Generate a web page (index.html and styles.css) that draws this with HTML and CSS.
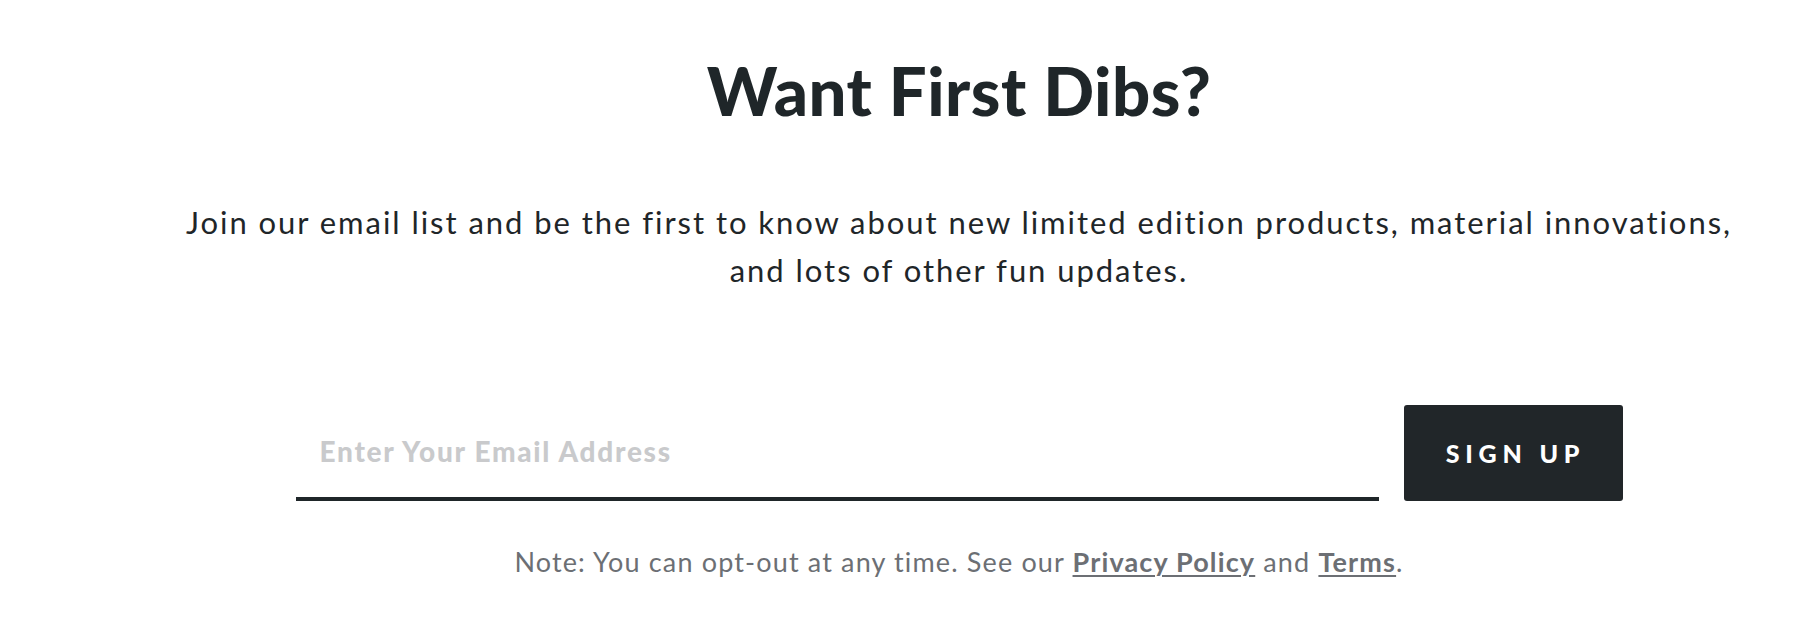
FILE: index.html
```html
<!DOCTYPE html>
<html lang="en">
<head>
<meta charset="utf-8">
<title>Want First Dibs?</title>
<link rel="stylesheet" href="styles.css">
</head>
<body>
<section class="signup">
  <h2 class="title">Want First Dibs?</h2>
  <p class="lead">Join our email list and be the first to know about new limited edition products, material innovations,<br>and lots of other fun updates.</p>
  <form class="form" onsubmit="return false;">
    <input class="email" type="email" placeholder="Enter Your Email Address">
    <button class="btn" type="submit">SIGN UP</button>
  </form>
  <p class="note">Note: You can opt-out at any time. See our <a href="#" class="link">Privacy Policy</a> and <a href="#" class="link">Terms</a>.</p>
</section>
</body>
</html>
```

FILE: styles.css
```css
* { box-sizing: border-box; }
html, body { margin: 0; padding: 0; background: #ffffff; }
body { font-family: "Lato", "Noto Sans", sans-serif; color: #1f2629; }

.signup {
  padding: 52px 0 40px 100px;
  display: flex;
  flex-direction: column;
  align-items: center;
  text-align: center;
}

.title {
  margin: 0;
  font-size: 67px;
  line-height: 77px;
  font-weight: 900;
  color: #1f2629;
  letter-spacing: 0.5px;
}

.lead {
  margin: 69px 0 0;
  font-size: 31px;
  line-height: 48px;
  font-weight: 400;
  letter-spacing: 1.95px;
  color: #1f2629;
  white-space: nowrap;
}

.form {
  margin: 111px 0 0;
  display: flex;
  align-items: stretch;
  gap: 25px;
  width: 1327px;
  height: 96px;
}

.email {
  flex: 1;
  border: 0;
  border-bottom: 4px solid #1f2629;
  outline: none;
  background: transparent;
  padding: 0 0 0 24px;
  font-family: "Lato", "Noto Sans", sans-serif;
  font-size: 28px;
  font-weight: 900;
  color: #1f2629;
}
.email::placeholder { color: #c9cacc; opacity: 1; letter-spacing: 1.7px; }

.btn {
  width: 219px;
  border: 0;
  border-radius: 3px;
  background: #212629;
  color: #ffffff;
  font-family: "Lato", "Noto Sans", sans-serif;
  font-size: 25px;
  font-weight: 900;
  letter-spacing: 5.8px;
  padding: 0 0 0 5px;
  cursor: pointer;
}

.note {
  margin: 45px 0 0;
  font-size: 27px;
  line-height: 32px;
  letter-spacing: 1.15px;
  color: #6c6f74;
}
.link {
  color: #6c6f74;
  font-weight: 700;
  text-decoration: underline;
  text-underline-offset: 3px;
  text-decoration-thickness: 2px;
}
```
